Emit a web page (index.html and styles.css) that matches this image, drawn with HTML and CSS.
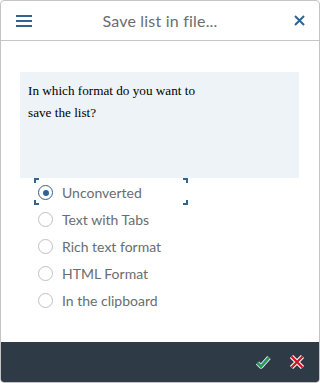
FILE: index.html
```html
<!DOCTYPE html>
<html lang="en">
<head>
  <meta charset="UTF-8" />
  <meta name="viewport" content="width=device-width, initial-scale=1.0" />
  <title>Save list in file...</title>
  <link rel="stylesheet" href="styles.css">
</head>
<body>
  <div class="dialog">
    <div class="header">
      <button class="icon-btn menu" aria-label="Menu">
        <svg width="16" height="12" viewBox="0 0 16 12">
          <rect x="0" y="0" width="16" height="2" fill="#32628f"/>
          <rect x="0" y="5" width="16" height="2" fill="#32628f"/>
          <rect x="0" y="10" width="16" height="2" fill="#32628f"/>
        </svg>
      </button>
      <div class="title">Save list in file...</div>
      <button class="icon-btn close" aria-label="Close">
        <svg width="11" height="11" viewBox="0 0 11 11">
          <path d="M1 1 L10 10 M10 1 L1 10" stroke="#32628f" stroke-width="2" fill="none"/>
        </svg>
      </button>
    </div>

    <div class="content">
      <div class="info">
        <p>In which format do you want to save the list?</p>
      </div>
      <div class="options">
        <label class="option focused"><span class="radio checked"></span>Unconverted</label>
        <label class="option"><span class="radio"></span>Text with Tabs</label>
        <label class="option"><span class="radio"></span>Rich text format</label>
        <label class="option"><span class="radio"></span>HTML Format</label>
        <label class="option"><span class="radio"></span>In the clipboard</label>
      </div>
    </div>

    <div class="footer">
      <button class="icon-btn" aria-label="OK">
        <svg width="16" height="16" viewBox="0 0 16 16">
          <path d="M2.5 9 L6 12.5 L14 3.5" stroke="#ffffff" stroke-width="4.5" fill="none" stroke-linejoin="round"/>
          <path d="M2.5 9 L6 12.5 L14 3.5" stroke="#4a9fd4" stroke-width="3.2" fill="none"/>
          <path d="M2.5 9 L6 12.5 L14 3.5" stroke="#2f9a3a" stroke-width="2" fill="none"/>
        </svg>
      </button>
      <button class="icon-btn" aria-label="Cancel">
        <svg width="16" height="16" viewBox="0 0 16 16">
          <path d="M2.5 2.5 L13.5 13.5 M13.5 2.5 L2.5 13.5" stroke="#ffffff" stroke-width="4.5" fill="none"/>
          <path d="M2.5 2.5 L13.5 13.5 M13.5 2.5 L2.5 13.5" stroke="#d2141e" stroke-width="2.4" fill="none"/>
        </svg>
      </button>
    </div>
  </div>
</body>
</html>
```

FILE: styles.css
```css
body {
  margin: 0;
  background: #fff;
  font-family: Lato, 'Open Sans', sans-serif;
}

.dialog {
  box-sizing: border-box;
  width: 320px;
  height: 383px;
  border: 1px solid #c4c4c4;
  border-radius: 4px;
  display: flex;
  flex-direction: column;
  overflow: hidden;
}

.icon-btn {
  background: none;
  border: none;
  padding: 0;
  cursor: pointer;
  display: flex;
  align-items: center;
  justify-content: center;
}

.header {
  height: 39px;
  border-bottom: 1px solid #c6c6c6;
  display: flex;
  align-items: center;
  padding: 0 14px 0 15px;
}

.header .title {
  flex: 1;
  text-align: center;
  font-size: 16px;
  letter-spacing: 0.2px;
  color: #6a6d70;
  padding-right: 6px;
}

.content {
  flex: 1;
  padding: 31px 20px 0 19px;
}

.info {
  background: #eef3f7;
  height: 106px;
  padding: 8px 8px 0;
  box-sizing: border-box;
}

.info p {
  margin: 0;
  width: 180px;
  font-family: 'Liberation Serif', 'Times New Roman', serif;
  font-size: 13.2px;
  line-height: 22px;
  color: #000;
}

.options {
  display: flex;
  flex-direction: column;
  width: 154px;
  margin-left: 14px;
}

.option {
  height: 27px;
  display: flex;
  align-items: center;
  gap: 9px;
  padding: 2px 0 0 4px;
  box-sizing: border-box;
  font-size: 14px;
  color: #6a6d70;
}

.option.focused {
  background:
    linear-gradient(#32628f, #32628f) left top / 5px 2px no-repeat,
    linear-gradient(#32628f, #32628f) left top / 2px 5px no-repeat,
    linear-gradient(#32628f, #32628f) right top / 5px 2px no-repeat,
    linear-gradient(#32628f, #32628f) right top / 2px 5px no-repeat,
    linear-gradient(#32628f, #32628f) left bottom / 5px 2px no-repeat,
    linear-gradient(#32628f, #32628f) left bottom / 2px 5px no-repeat,
    linear-gradient(#32628f, #32628f) right bottom / 5px 2px no-repeat,
    linear-gradient(#32628f, #32628f) right bottom / 2px 5px no-repeat;
}

.radio {
  box-sizing: border-box;
  width: 15px;
  height: 15px;
  border: 1px solid #bfbfbf;
  border-radius: 50%;
  display: flex;
  align-items: center;
  justify-content: center;
  flex-shrink: 0;
}

.radio.checked {
  border-color: #32628f;
}

.radio.checked::after {
  content: '';
  width: 6px;
  height: 6px;
  border-radius: 50%;
  background: #32628f;
}

.footer {
  height: 40px;
  background: #2e3a46;
  display: flex;
  align-items: center;
  justify-content: flex-end;
  gap: 18px;
  padding: 0 14px 0 0;
}
```
